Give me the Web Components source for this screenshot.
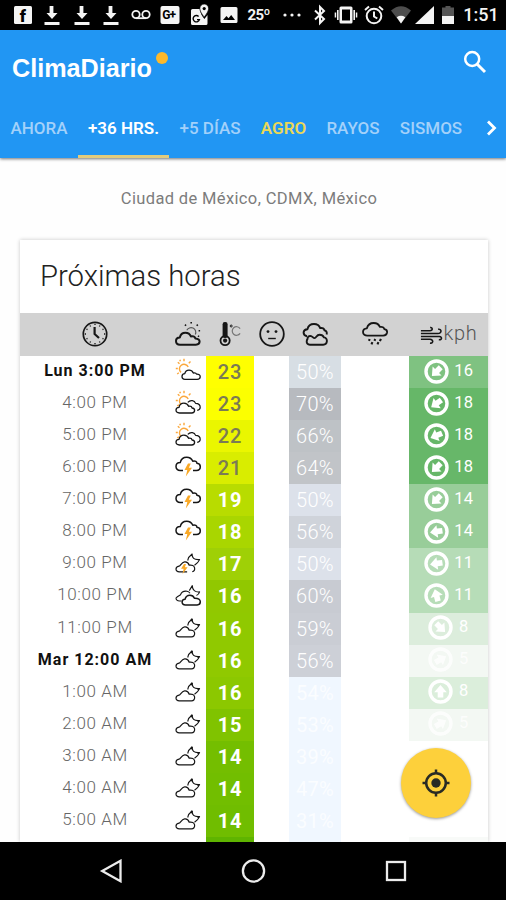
<!DOCTYPE html>
<html lang="es">
<head>
<meta charset="utf-8">
<title>ClimaDiario</title>
<style>
body { margin: 0; background: #fefefe; font-family: Roboto, "Liberation Sans", sans-serif; }
</style>
</head>
<body>
<clima-app></clima-app>

<script>
const CLOUD = "M5 22.5C2.5 22.5 1 20.8 1 18.8C1 16.8 2.6 15.4 4.8 15.3C5.5 12.3 7.8 10.6 10.4 10.6C13 10.6 15 12 15.9 14.2C18.3 13.8 20 14.8 20.4 16.3C23.2 16.5 24.6 17.7 24.6 19.4C24.6 21.2 23.2 22.5 21 22.5Z";
const SMALL_CLOUD = "M10 21.3C8 21.3 7 20 7 18.5C7 16.9 8.2 15.8 9.8 15.7C10.3 13.4 12 12.2 14 12.2C16 12.2 17.5 13.2 18.3 15C20 14.6 21.2 15.2 21.7 16.2C23.8 16.1 25.2 17.1 25.2 18.8C25.2 20.4 24 21.3 22.2 21.3Z";
const FRONT_CLOUD = "M4.5 23C2 23 1 21.6 1 20.1C1 18.4 2.4 17.4 4 17.3C4.5 14.7 6.6 13.2 8.9 13.2C11.1 13.2 12.8 14.3 13.6 16.3C15.6 15.9 16.8 16.8 17.1 18C18.9 18.2 19.6 19.2 19.6 20.3C19.6 21.8 18.4 23 16.7 23Z";
const BIG_CLOUD = "M8 17.5H5.2C2.7 17.5 1 15.8 1 13.5C1 11.2 2.8 9.7 5.2 9.6C6 6.2 8.5 4.2 11.7 4.2C14.7 4.2 16.8 5.9 17.8 8.2C20.5 7.6 21.8 8.8 22 10.3C24.2 10.6 25.3 12 25.3 13.8C25.3 16 23.7 17.5 21.4 17.5H18";
const MOON_CLOUD = "M4.3 21.8C2.2 21.8 1 20.8 1 19.1C1 17.5 2.2 16.5 4 16.2C5.8 15.6 6.3 12.4 9.6 11.9C12.2 11.6 13.6 13.4 14.2 15.2C17 14.6 19.2 15.7 19.6 17.9C20 20.3 18.6 21.8 16.4 21.8Z";
const MOON = "M12.7 10.5L13.6 7.5L17.1 4C17 7.8 18.7 10.1 24.6 9.6C23.8 11.6 21.7 13.6 19.5 15.2";
const BOLT = `<path d="M13 10.5L9.5 17H12.3L10.8 23.5L17 14.8H13.8L15.8 10.5Z" fill="#f9a825" stroke="none"/>`;
const SUN = `<g stroke="#fba73b" stroke-width="1.4"><path d="M6 14.4A4.6 4.6 0 1 1 13.2 9"/><path d="M9 .8V3.2M2.8 4.2L4.5 5.7M15.5 3.6L13.8 5.3M.8 10.5H2.8M2.2 16L3.8 14.8M4.8 1.8L5.4 3.2"/></g>`;

const ICONS = {
  clock: `<circle cx="13" cy="13" r="11.7" stroke-width="1.7"/><path d="M12.6 6V13L17 17" stroke-width="2.2"/><path d="M13 2.8V4M13 22V23.2M2.8 13H4M22 13H23.2M8 4.5L8.6 5.5M18 4.5L17.4 5.5M4.5 8L5.5 8.6M21.5 8L20.5 8.6M4.5 18L5.5 17.4M21.5 18L20.5 17.4M8 21.5L8.6 20.5M18 21.5L17.4 20.5" stroke-width="1.3"/>`,
  weather: `<path d="${CLOUD}" stroke-width="2" transform="translate(0 1.2)"/><path d="M11.8 9.3A4.6 4.6 0 1 1 20.3 13.4" stroke-width="1.1" stroke="#555"/><path d="M16.2 1V2.5M10 3.6L11 4.7M22.8 3.6L21.7 4.7M23.6 9.7H25.1M23 14.8L24.1 15.6" stroke-width="1.6"/>`,
  thermo: `<g transform="translate(1.6 0)"><rect x="4" y="1" width="5" height="16" rx="2.2" fill="currentColor" stroke="none"/><circle cx="6.5" cy="19.6" r="4.6" stroke-width="1.8"/><circle cx="6.5" cy="19.6" r="2.1" fill="currentColor" stroke="none"/><circle cx="12.6" cy="5" r="1" stroke-width="1"/><path d="M21.5 7.6A4.3 4.3 0 1 0 21.5 12.4" stroke="#777" stroke-width="1.2"/></g>`,
  face: `<circle cx="13" cy="13" r="11.8" stroke-width="1.8"/><path d="M9.2 17.5H16.8" stroke-width="1.4"/><circle cx="9" cy="10.6" r="1.4" fill="currentColor" stroke="none"/><circle cx="17" cy="10.6" r="1.4" fill="currentColor" stroke="none"/>`,
  clouds: `<path d="M5 15.2C2.9 14.8 1.5 13.4 1.6 11.4C1.7 9.3 3.4 8.3 5.4 8.2C6.2 5 8.7 3 12 3C15 3 17.3 4.5 18.2 7.1C20.8 6.6 22.1 7.6 22.4 9.3C24.6 9.8 25.2 11.8 24.6 13.5" stroke-width="1.9"/><path d="M7.9 23.7C5.5 23.7 4.6 22 4.7 20.2C4.8 18.8 5.5 18 5.5 18C5.5 15.7 7 14.6 9.1 15.1C10.6 15.5 11.1 17.1 12.6 17.1C14.4 17 14.4 13.8 17.6 13.8C20 13.8 21.4 15.3 21.9 16.4C24.2 16.5 25 18.4 24.9 20.2C24.7 22.3 23.4 23.7 21.2 23.7Z" stroke-width="1.9"/>`,
  rain: `<path d="M6 14.6C3 14.9 1 13.2 1 11C1 8.8 2.7 7.5 4.9 7.3C5.8 3.9 8.4 2 11.7 2C14.8 2 16.9 3.6 17.9 5.9C20.5 5.4 22 6.5 22.3 8.1C24.4 8.4 25.3 9.6 25.1 11.4C24.8 13.5 23 14.8 20.5 14.6Z" stroke-width="1.8"/><path d="M7.6 18L7 19.8M13.2 18L12.5 19.8M18.9 17.8L17.9 20.2M10.4 21.2L9.5 23.4M16.4 21.2L15.5 23.4" stroke-width="2.1"/>`,
  wind: `<path d="M1 8.3H10.8C14.2 8.3 13.8 4.4 11 5M1 11.4H19.4C24 11.4 23.6 5.8 19.6 6.8M1 14.6H21C24.5 14.8 23.8 19 20.4 18M1 17.7H10.8C15 17.8 14.5 22.7 10.9 21.6" stroke-width="1.7"/>`,
  sun: SUN + `<path d="${SMALL_CLOUD}" stroke-width="1.3"/>`,
  sunclouds: SUN + `<path d="M12.8 12.3C15.6 9.3 19.6 10.5 20.6 13.4C23.5 13.5 25.2 15 25.2 17.3C25.2 19.2 24 20.2 22.2 20.4" stroke-width="1.2"/><path d="${FRONT_CLOUD}" stroke-width="1.3" fill="#fff"/>`,
  storm: `<g transform="translate(0 -1)"><path d="${BIG_CLOUD}" stroke-width="1.5"/>${BOLT}</g>`,
  nightstorm: `<path d="${MOON}" stroke-width="1.1"/><path d="${MOON_CLOUD}" stroke-width="1.2" fill="#fff" stroke-dasharray="34 5"/><path d="M9 14L6 18.8H8.6L7.6 24L12.6 17.3H9.9L11 14Z" fill="#f9a825" stroke="none"/>`,
  nightclouds: `<path d="M6.3 19H4.5C2.2 19 1 17.7 1 16C3 13.5 4 14 5.5 12.8C6.5 10 9 8.8 12 9.2C13.5 9.5 14.3 10.2 15 11.2" stroke-width="1.1"/><path d="M14.3 8.6L17.3 3.6C17.2 8 20.3 10.6 24.6 9.9C24 11.9 22.9 13 21.5 13.6" stroke-width="1.1"/><path d="M10.5 22.9C8.2 22.9 7.1 21.7 7.1 20C7.1 18.4 8.4 17.2 10 17.2C10.7 14.6 12.4 13.2 14.9 13.2C17.1 13.2 18.7 14.3 19.4 16.2C23.5 16.1 25.3 17.3 25.3 19.8C25.3 21.7 24.1 22.9 22.2 22.9Z" fill="#fff" stroke-width="1.5"/>`,
  night: `<path d="${MOON}" stroke-width="1.1"/><path d="M16.2 6.2L17.1 4M22.5 10.2L24 10" stroke-width="2"/><path d="${MOON_CLOUD}" stroke-width="1.2" fill="#fff"/>`,
};

class SkyIcon extends HTMLElement {
  connectedCallback() {
    this.attachShadow({ mode: "open" }).innerHTML = `
      <style>
        :host { display: inline-flex; width: 26px; height: 26px; color: #161616; }
        svg { width: 100%; height: 100%; overflow: visible; }
      </style>
      <svg viewBox="0 0 26 26" fill="none" stroke="currentColor" stroke-linejoin="round">${ICONS[this.getAttribute("name")]}</svg>`;
  }
}
customElements.define("sky-icon", SkyIcon);

class StatusBar extends HTMLElement {
  constructor() {
    super();
    const download = `<svg width="18" height="22" viewBox="0 0 18 22"><path d="M6.6 2H10.4V9H14.5L9 15L3.5 9H6.6ZM1.5 18H16.5V21H1.5Z"/></svg>`;
    this.attachShadow({ mode: "open" }).innerHTML = `
      <style>
        :host {
          display: grid; height: 30px; padding-left: 8px; background: #000; color: #f4f4f4;
          grid-template-columns: repeat(9, 29.5px) 36.5px 20px 31px 26px 28px 20px 26px 40px;
          align-items: center; justify-items: center; box-sizing: border-box;
          font-weight: 500; font-size: 18px; line-height: 30px;
        }
        svg { display: block; fill: currentColor; overflow: visible; }
        .fb { width: 18px; height: 18px; border-radius: 1.5px; background: #f4f4f4; color: #000; font-size: 17px; font-weight: 900; line-height: 20px; text-align: center; }
        .temp { font-size: 15px; font-weight: 700; letter-spacing: -0.6px; }
      </style>
      <span class="fb">f</span>
      ${download}${download}${download}
      <svg width="20" height="12" viewBox="0 0 20 12" style="fill:none;stroke:currentColor;stroke-width:1.8"><circle cx="5" cy="5.5" r="3.7"/><circle cx="15" cy="5.5" r="3.7"/><path d="M5 9.2H15"/></svg>
      <svg width="20" height="20" viewBox="0 0 20 20"><rect x=".5" y="1" width="19" height="18" rx="2"/><text x="2.2" y="14" fill="#000" font-size="12" font-weight="700" letter-spacing="-.8">G+</text></svg>
      <svg width="20" height="22" viewBox="0 0 20 22"><path d="M2.5 5H10.2C10 9 12 12 14.4 15L17.5 11V19.5Q17.5 21 16 21H2.5Q1 21 1 19.5V6.5Q1 5 2.5 5Z"/><path d="M14.2 0A4.4 4.4 0 0 0 9.8 4.4C9.8 8 14.2 13 14.2 13S18.6 8 18.6 4.4A4.4 4.4 0 0 0 14.2 0Z" stroke="#000" stroke-width=".7"/><circle cx="14.2" cy="4.6" r="1.6" fill="#000"/><path d="M8.6 12.4A3.2 3.2 0 1 0 9.4 15.6H7" fill="none" stroke="#000" stroke-width="1.4"/></svg>
      <svg width="18" height="18" viewBox="0 0 18 18"><path fill-rule="evenodd" d="M2 1H16Q17.5 1 17.5 2.5V15.5Q17.5 17 16 17H2Q.5 17 .5 15.5V2.5Q.5 1 2 1ZM3 14H15L11.2 9L8.5 12.3L6.5 10Z"/></svg>
      <span class="temp">25º</span>
      <svg width="18" height="4" viewBox="0 0 18 4"><circle cx="2" cy="2" r="1.6"/><circle cx="9" cy="2" r="1.6"/><circle cx="16" cy="2" r="1.6"/></svg>
      <svg width="14" height="20" viewBox="0 0 14 20" style="fill:none;stroke:currentColor;stroke-width:2"><path d="M2 5.5L11 14L7 18V2L11 6L2 14.5"/></svg>
      <svg width="24" height="18" viewBox="0 0 24 18"><path fill-rule="evenodd" d="M7 .5H17Q18.5 .5 18.5 2V16Q18.5 17.5 17 17.5H7Q5.5 17.5 5.5 16V2Q5.5 .5 7 .5ZM8 3.5V14.5H16V3.5Z"/><path d="M3 4H4.6V14H3ZM.7 6.5H2.2V11.5H.7ZM19.4 4H21V14H19.4ZM21.8 6.5H23.3V11.5H21.8Z"/></svg>
      <svg width="20" height="20" viewBox="0 0 20 20" style="fill:none;stroke:currentColor;stroke-width:2"><circle cx="10" cy="11" r="7.3"/><path d="M1 5L5 1.6M19 5L15 1.6M10 6.5V11.5L13.3 13.5"/></svg>
      <svg width="22" height="20" viewBox="0 0 22 20"><path d="M1 5.5Q11-3 21 5.5L11 18.5Z" fill="#4d4d4d"/><path d="M6.7 12.2Q11 9.5 15.3 12.2L11 18.5Z"/></svg>
      <svg width="20" height="20" viewBox="0 0 20 20"><path d="M0 19L19 1V19Z"/></svg>
      <svg width="12" height="20" viewBox="0 0 12 20"><path d="M3.5 1H8.5V2.5H12V11H0V2.5H3.5Z" fill="#555"/><path d="M0 11H12V19H0Z"/></svg>
      <span>1:51</span>`;
  }
}
customElements.define("status-bar", StatusBar);

class NavTab extends HTMLElement {
  constructor() {
    super();
    this.attachShadow({ mode: "open" }).innerHTML = `
      <style>
        :host {
          display: flex; align-items: center; justify-content: center; box-sizing: border-box;
          height: 61px; padding-top: 4px; border-bottom: 3.5px solid transparent;
          color: #a3d1fa; font-size: 17px; font-weight: 500; white-space: nowrap;
        }
        :host([active]) { color: #fff; border-color: #e3cb7c; font-weight: 600; }
        :host([gold]) { color: #ebd857; font-weight: 600; }
      </style>
      <slot></slot>`;
  }
}
customElements.define("nav-tab", NavTab);

class AppHeader extends HTMLElement {
  constructor() {
    super();
    this.attachShadow({ mode: "open" }).innerHTML = `
      <style>
        :host { display: block; height: 128px; background: #2196f3; box-shadow: 0 1px 3px rgba(0,0,0,.55); position: relative; }
        .top { display: flex; height: 67px; justify-content: space-between; padding: 0 19px 0 12px; }
        .logo { display: flex; color: #fff; font: 700 25.2px/28px "Liberation Sans", Arial, sans-serif; padding-top: 24px; }
        .dot { width: 12px; height: 12px; margin: -2px 0 0 4px; border-radius: 50%; background: #fcb92c; }
        .search { margin-top: 20px; }
        nav { display: grid; grid-template-columns: 78px 91px 82px 65px 74px 82px 34px; }
        .more { align-self: center; justify-self: center; margin: 1px 0 0 5px; }
      </style>
      <div class="top">
        <div class="logo"><slot name="title"></slot><span class="dot"></span></div>
        <svg class="search" width="24" height="24" viewBox="0 0 24 24" fill="none" stroke="#fff" stroke-width="2.5"><circle cx="9.2" cy="9" r="7"/><path d="M14 14L22 22" stroke-width="3"/></svg>
      </div>
      <nav>
        <slot></slot>
        <svg class="more" width="12" height="16" viewBox="0 0 12 16" fill="none" stroke="#fff" stroke-width="2.8"><path d="M2 1.5L8.5 8L2 14.5"/></svg>
      </nav>`;
  }
}
customElements.define("app-header", AppHeader);

class WindBadge extends HTMLElement {
  connectedCallback() {
    this.attachShadow({ mode: "open" }).innerHTML = `
      <style>
        :host { display: flex; align-items: center; justify-content: center; gap: 5.5px; height: 100%; font-size: 16.5px; letter-spacing: .3px; }
        svg { display: block; margin-top: -2px; }
        span { margin-top: -3px; }
      </style>
      <svg width="25" height="25" viewBox="-12.5 -12.5 25 25">
        <circle r="10.5" fill="none" stroke="#fff" stroke-width="3.4"/>
        <path transform="rotate(${this.getAttribute("angle")})" d="M0-6.5L6.3.8H2.8V6H-2.8V.8H-6.3Z" fill="#fff"/>
      </svg>
      <span><slot></slot></span>`;
  }
}
customElements.define("wind-badge", WindBadge);

// time, icon, temp, temp colour, clouds, clouds colour, wind, arrow angle, wind colour
const HOURS = [
  ["Lun 3:00 PM", "sun", 23, "#ffff00", 50, "#d7dee4", 16, 225, "#7fc281"],
  ["4:00 PM", "sunclouds", 23, "#fcff00", 70, "#b7babf", 18, 235, "#66b768"],
  ["5:00 PM", "sunclouds", 22, "#eaf600", 66, "#bec2c6", 18, 248, "#67b769"],
  ["6:00 PM", "storm", 21, "#d9ed00", 64, "#c1c4c8", 18, 225, "#67b769"],
  ["7:00 PM", "storm", 19, "#b8dc00", 50, "#dce1ea", 14, 225, "#98cd99"],
  ["8:00 PM", "storm", 18, "#a9d600", 56, "#cfd3da", 14, 262, "#98cd99"],
  ["9:00 PM", "nightstorm", 17, "#9fd006", 50, "#dce1ea", 11, 262, "#b6dcb7"],
  ["10:00 PM", "nightclouds", 16, "#91c800", 60, "#c8cbd2", 11, 345, "#b7ddb8"],
  ["11:00 PM", "night", 16, "#90c900", 59, "#cacdd4", 8, 135, "#dceddc"],
  ["Mar 12:00 AM", "night", 16, "#90c900", 56, "#cdd0d7", 5, 60, "#f3f8f3"],
  ["1:00 AM", "night", 16, "#8cc800", 54, "#f0f7ff", 8, 0, "#dbeedb"],
  ["2:00 AM", "night", 15, "#80c300", 53, "#f0f7ff", 5, 60, "#f3f8f3"],
  ["3:00 AM", "night", 14, "#74be00", 39, "#f0f7ff"],
  ["4:00 AM", "night", 14, "#72be00", 47, "#f0f7ff"],
  ["5:00 AM", "night", 14, "#70bd00", 31, "#f0f7ff"],
];

class HourTable extends HTMLElement {
  constructor() {
    super();
    const rows = HOURS.map(([time, icon, temp, tempBg, cloud, cloudBg, wind, angle, windBg]) => {
      const day = /^[LM]/.test(time) ? "day" : "";
      const late = cloudBg === "#f0f7ff" ? "late" : "";
      const badge = wind ? `<wind-badge angle="${angle}" style="opacity:${wind < 6 ? .8 : 1}">${wind}</wind-badge>` : "";
      return `<div class="row">
        <div class="time ${day}">${time}</div>
        <div class="icon"><sky-icon name="${icon}"></sky-icon></div>
        <div class="temp ${temp > 20 ? "warm" : ""}" style="background:${tempBg}">${temp}</div>
        <div></div>
        <div class="cloud ${late}" style="background:${cloudBg}">${cloud}%</div>
        <div></div>
        <div class="wind" style="background:${windBg || "none"}">${badge}</div>
      </div>`;
    }).join("");
    this.attachShadow({ mode: "open" }).innerHTML = `
      <style>
        :host { display: block; }
        .head, .row { display: grid; grid-template-columns: 150px 36px 48px 35px 52px 68px 79px; text-align: center; }
        .head { height: 43px; background: #d2d2d2; align-items: center; padding-bottom: 2px; box-sizing: border-box; }
        .head > div { display: flex; justify-content: center; }
        .head .kph { align-items: center; font-size: 20px; font-weight: 300; color: #555; letter-spacing: .7px; line-height: 24px; padding-bottom: 1px; }
        .kph sky-icon { width: 24px; margin-top: 3px; }
        .row { height: 32.07px; line-height: 30px; }
        .time { font-size: 17px; font-weight: 300; letter-spacing: .6px; color: #666; line-height: 29px; }
        .time.day { font-size: 16px; font-weight: 700; color: #111; letter-spacing: 1px; }
        .icon { display: flex; align-items: center; justify-content: center; }
        .icon sky-icon { margin-top: -2px; }
        .temp { font-size: 20px; font-weight: 700; color: #fff; letter-spacing: .8px; line-height: 32px; }
        .temp.warm { color: #7b7b55; font-weight: 500; }
        .cloud { font-size: 20px; font-weight: 300; color: #fff; letter-spacing: .3px; line-height: 32px; }
        .cloud.late { color: #fbfdff; font-weight: 400; }
        .wind { color: #fff; }
        .tail { height: 5px; }
      </style>
      <div class="head">
        <div><sky-icon name="clock"></sky-icon></div>
        <div><sky-icon name="weather"></sky-icon></div>
        <div><sky-icon name="thermo"></sky-icon></div>
        <div><sky-icon name="face"></sky-icon></div>
        <div><sky-icon name="clouds"></sky-icon></div>
        <div><sky-icon name="rain"></sky-icon></div>
        <div class="kph"><sky-icon name="wind"></sky-icon>kph</div>
      </div>
      ${rows}
      <div class="row tail"><div></div><div></div><div style="background:#5fb400"></div><div></div><div style="background:#f0f7ff"></div><div></div><div style="background:#f8faf8"></div></div>`;
  }
}
customElements.define("hour-table", HourTable);

class InfoCard extends HTMLElement {
  constructor() {
    super();
    this.attachShadow({ mode: "open" }).innerHTML = `
      <style>
        :host { display: block; margin: 0 18px 0 20px; background: #fff; box-shadow: 0 0 4px rgba(0,0,0,.22); }
        h2 { margin: 0; height: 73px; padding-left: 20px; box-sizing: border-box; font-size: 29.3px; font-weight: 300; line-height: 72px; color: #222; }
      </style>
      <h2><slot name="heading"></slot></h2>
      <slot></slot>`;
  }
}
customElements.define("info-card", InfoCard);

class LocateButton extends HTMLElement {
  constructor() {
    super();
    this.attachShadow({ mode: "open" }).innerHTML = `
      <style>
        :host {
          position: absolute; right: 35px; bottom: 82px; width: 70px; height: 70px; border-radius: 50%;
          display: flex; align-items: center; justify-content: center;
          background: #fdd03b; box-shadow: 0 1px 3px rgba(0,0,0,.4);
        }
      </style>
      <svg width="28" height="28" viewBox="-14 -14 28 28" fill="none" stroke="#292b24" stroke-width="2.5"><circle r="9.8"/><circle r="4.7" fill="#292b24" stroke="none"/><path d="M0-13.5V-9M0 13.5V9M-13.5 0H-9M13.5 0H9"/></svg>`;
  }
}
customElements.define("locate-button", LocateButton);

class SystemNav extends HTMLElement {
  constructor() {
    super();
    this.attachShadow({ mode: "open" }).innerHTML = `
      <style>
        :host { display: grid; grid-template-columns: repeat(3, 142px); justify-content: center; justify-items: center; align-items: center; height: 58px; background: #000; }
        svg { fill: none; stroke: #ececec; stroke-width: 2.3; }
      </style>
      <svg width="24" height="24" viewBox="0 0 24 24"><path d="M21.5 1.8V22.2L3.2 12Z"/></svg>
      <svg width="26" height="26" viewBox="0 0 26 26"><circle cx="13.5" cy="13" r="10.6"/></svg>
      <svg width="24" height="24" viewBox="0 0 24 24"><rect x="4" y="3" width="18" height="18"/></svg>`;
  }
}
customElements.define("system-nav", SystemNav);

class ClimaApp extends HTMLElement {
  constructor() {
    super();
    this.attachShadow({ mode: "open" }).innerHTML = `
      <style>
        :host { display: flex; flex-direction: column; position: relative; width: 506px; height: 900px; overflow: hidden; }
        main { flex: 1; min-height: 0; overflow: hidden; }
        .place { height: 82px; box-sizing: border-box; padding: 1px 8px 0 0; line-height: 79px; text-align: center; font-size: 16.5px; letter-spacing: .36px; color: #7c7c7c; }
      </style>
      <status-bar></status-bar>
      <app-header>
        <span slot="title">ClimaDiario</span>
        <nav-tab>AHORA</nav-tab>
        <nav-tab active>+36 HRS.</nav-tab>
        <nav-tab>+5 DÍAS</nav-tab>
        <nav-tab gold>AGRO</nav-tab>
        <nav-tab>RAYOS</nav-tab>
        <nav-tab>SISMOS</nav-tab>
      </app-header>
      <main>
        <div class="place">Ciudad de México, CDMX, México</div>
        <info-card>
          <span slot="heading">Próximas horas</span>
          <hour-table></hour-table>
        </info-card>
      </main>
      <system-nav></system-nav>
      <locate-button></locate-button>`;
  }
}
customElements.define("clima-app", ClimaApp);
</script>
</body>
</html>
